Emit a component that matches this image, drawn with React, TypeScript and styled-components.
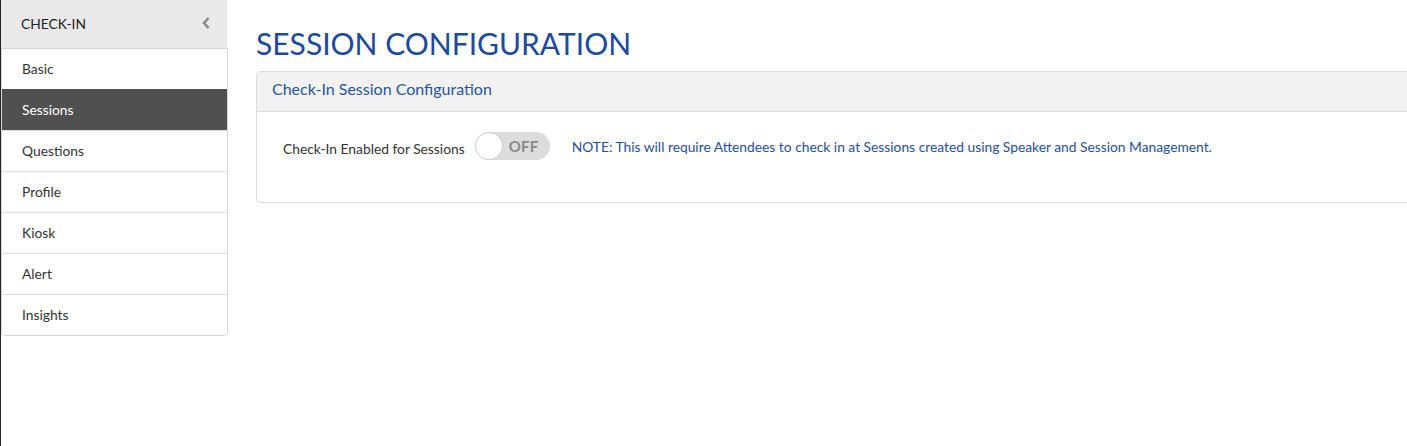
import React from "react";
import styled, { createGlobalStyle } from "styled-components";

const Global = createGlobalStyle`
  html, body { margin: 0; padding: 0; background: #fff; }
  body { font-family: Lato, "Open Sans", "Liberation Sans", sans-serif; }
  * { box-sizing: border-box; }
`;

const Page = styled.div`
  display: flex;
  min-height: 446px;
  border-left: 1px solid #2a2622;
`;

const Sidebar = styled.aside`
  width: 226px;
  flex: none;
  display: flex;
  flex-direction: column;
`;

const SideHeader = styled.div`
  height: 48px;
  background: #e9e9e9;
  display: flex;
  align-items: center;
  justify-content: space-between;
  padding: 0 16px 2px 20px;
  font-size: 13.8px;
  color: #222;
`;

const NavList = styled.ul`
  list-style: none;
  margin: 0;
  padding: 0;
  width: 227px;
  border: 1px solid #d6d6d6;
  border-radius: 0 0 4px 4px;
  overflow: hidden;
`;

const NavItem = styled.li<{ $active?: boolean }>`
  height: 41px;
  display: flex;
  align-items: center;
  padding: 0 0 2px 20px;
  font-size: 13.8px;
  color: ${(p) => (p.$active ? "#fff" : "#333")};
  background: ${(p) => (p.$active ? "#505050" : "#fff")};
  border-top: 1px solid ${(p) => (p.$active ? "#505050" : "#dcdcdc")};
  &:first-child { border-top: none; height: 40px; }
`;

const Main = styled.main`
  flex: 1;
  min-width: 0;
  overflow: hidden;
  padding: 27px 0 0 29px;
`;

const Title = styled.h1`
  margin: 0 0 12px 0;
  font-size: 30px;
  font-weight: 400;
  color: #1c4a9e;
  line-height: 32px;
`;

const Panel = styled.section`
  margin-right: -20px;
  border: 1px solid #dcdcdc;
  border-radius: 4px 0 0 4px;
`;

const PanelHeading = styled.div`
  height: 40px;
  background: #f2f2f2;
  border-bottom: 1px solid #dcdcdc;
  display: flex;
  align-items: center;
  padding: 0 0 6px 15px;
  font-size: 16px;
  color: #2655a6;
`;

const PanelBody = styled.div`
  height: 90px;
  display: flex;
  align-items: flex-start;
  padding: 20px 0 0 26px;
`;

const Row = styled.div`
  display: flex;
  align-items: center;
  height: 28px;
`;

const Label = styled.span`
  font-size: 13.8px;
  color: #333;
  margin-right: 10px;
  margin-top: 5px;
`;

const Toggle = styled.div`
  position: relative;
  width: 75px;
  height: 28px;
  border-radius: 14px;
  background: #dcdcdc;
  display: flex;
  align-items: center;
  justify-content: flex-end;
  padding-right: 11px;
`;

const Knob = styled.span`
  position: absolute;
  left: 0;
  top: 0;
  width: 28px;
  height: 28px;
  border-radius: 50%;
  background: #fff;
  border: 1px solid #d0d0d0;
`;

const ToggleText = styled.span`
  font-size: 15px;
  font-weight: 700;
  color: #8a8a8a;
  letter-spacing: 0.3px;
`;

const Note = styled.span`
  margin-left: 22px;
  font-size: 13.8px;
  color: #1f4ea4;
`;

const Chevron = () => (
  <svg width="10" height="14" viewBox="0 0 10 14">
    <path d="M7.5 2 L3 7 L7.5 12" fill="none" stroke="#8a8a8a" strokeWidth="2.6" strokeLinejoin="miter" />
  </svg>
);

const items = ["Basic", "Sessions", "Questions", "Profile", "Kiosk", "Alert", "Insights"];

export default function App() {
  return (
    <>
      <Global />
      <Page>
        <Sidebar>
          <SideHeader>
            <span>CHECK-IN</span>
            <Chevron />
          </SideHeader>
          <NavList>
            {items.map((i) => (
              <NavItem key={i} $active={i === "Sessions"}>
                {i}
              </NavItem>
            ))}
          </NavList>
        </Sidebar>
        <Main>
          <Title>SESSION CONFIGURATION</Title>
          <Panel>
            <PanelHeading>Check-In Session Configuration</PanelHeading>
            <PanelBody>
              <Row>
                <Label>Check-In Enabled for Sessions</Label>
                <Toggle>
                  <Knob />
                  <ToggleText>OFF</ToggleText>
                </Toggle>
                <Note>
                  NOTE: This will require Attendees to check in at Sessions created using Speaker and Session Management.
                </Note>
              </Row>
            </PanelBody>
          </Panel>
        </Main>
      </Page>
    </>
  );
}
